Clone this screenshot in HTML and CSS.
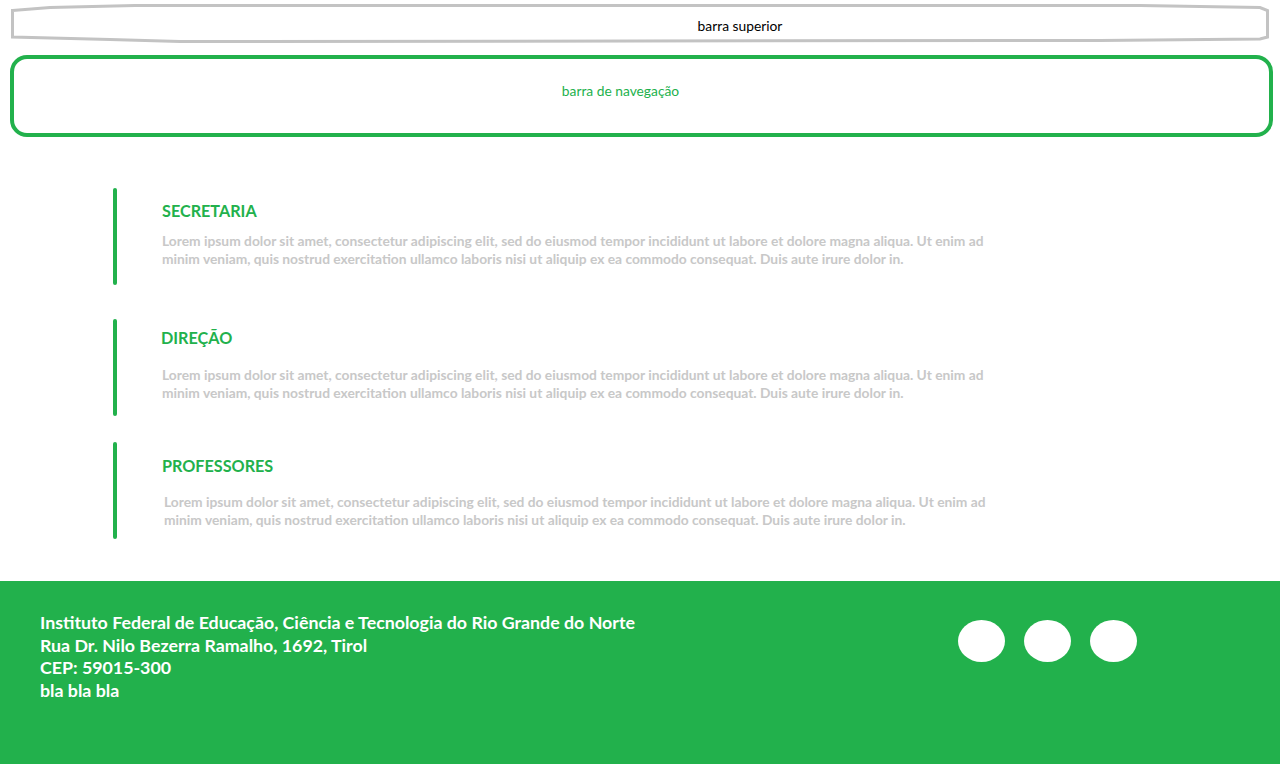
FILE: index.html
```html
<!DOCTYPE html>
<html lang="pt-BR">
<head>
<meta charset="utf-8">
<title>IFRN</title>
<link rel="stylesheet" href="styles.css">
</head>
<body>
<header class="topbar">
  <svg class="topbar-outline" viewBox="0 0 1260 40" preserveAspectRatio="none" aria-hidden="true">
    <polygon points="2.5,6.5 40,3.5 125,1.5 1130,1.5 1250,3.5 1257.5,6.5 1257.5,33 1250,35 1090,36.5 170,37.5 100,35.5 2.5,33" />
  </svg>
  <span class="topbar-label">barra superior</span>
</header>
<nav class="navbar">
  <span class="navbar-label">barra de navegação</span>
</nav>
<main class="content">
  <section class="block block-first">
    <div class="block-bar"></div>
    <div class="block-body">
      <h2 class="block-title">SECRETARIA</h2>
      <p class="block-text">Lorem ipsum dolor sit amet, consectetur adipiscing elit, sed do eiusmod tempor incididunt ut labore et dolore magna aliqua. Ut enim ad minim veniam, quis nostrud exercitation ullamco laboris nisi ut aliquip ex ea commodo consequat. Duis aute irure dolor in.</p>
    </div>
  </section>
  <section class="block block-second">
    <div class="block-bar"></div>
    <div class="block-body">
      <h2 class="block-title">DIREÇÃO</h2>
      <p class="block-text">Lorem ipsum dolor sit amet, consectetur adipiscing elit, sed do eiusmod tempor incididunt ut labore et dolore magna aliqua. Ut enim ad minim veniam, quis nostrud exercitation ullamco laboris nisi ut aliquip ex ea commodo consequat. Duis aute irure dolor in.</p>
    </div>
  </section>
  <section class="block block-third">
    <div class="block-bar"></div>
    <div class="block-body">
      <h2 class="block-title">PROFESSORES</h2>
      <p class="block-text">Lorem ipsum dolor sit amet, consectetur adipiscing elit, sed do eiusmod tempor incididunt ut labore et dolore magna aliqua. Ut enim ad minim veniam, quis nostrud exercitation ullamco laboris nisi ut aliquip ex ea commodo consequat. Duis aute irure dolor in.</p>
    </div>
  </section>
</main>
<footer class="footer">
  <address class="footer-info">
    Instituto Federal de Educação, Ciência e Tecnologia do Rio Grande do Norte<br>
    Rua Dr. Nilo Bezerra Ramalho, 1692, Tirol<br>
    CEP: 59015-300<br>
    bla bla bla
  </address>
  <div class="footer-social">
    <span class="social-dot"></span>
    <span class="social-dot"></span>
    <span class="social-dot"></span>
  </div>
</footer>
</body>
</html>
```

FILE: styles.css
```css
* { box-sizing: border-box; }

html, body {
  margin: 0;
  padding: 0;
  background: #ffffff;
  font-family: "Lato", "Open Sans", sans-serif;
}

.topbar {
  position: relative;
  height: 40px;
  margin: 4px 10px 0 10px;
  display: flex;
  align-items: center;
  justify-content: center;
  padding-left: 200px;
  padding-top: 3px;
}

.topbar-outline {
  position: absolute;
  inset: 0;
  width: 100%;
  height: 100%;
}

.topbar-outline polygon {
  fill: none;
  stroke: #c3c3c3;
  stroke-width: 3;
}

.topbar-label {
  position: relative;
  font-size: 13.8px;
  color: #000000;
}

.navbar {
  height: 82px;
  margin: 11px 7px 0 10px;
  border: 4px solid #22b14c;
  border-radius: 17px;
  display: flex;
  align-items: center;
  justify-content: center;
  padding-right: 42px;
  padding-bottom: 12px;
}

.navbar-label {
  font-size: 13.8px;
  color: #22b14c;
}

.content {
  padding: 51px 0 42px 113px;
  display: flex;
  flex-direction: column;
}

.block {
  display: flex;
  height: 97px;
}

.block-second { margin-top: 34px; }
.block-third { margin-top: 26px; }

.block-bar {
  width: 4px;
  flex: none;
  background: #22b14c;
  border-radius: 2px;
}

.block-body {
  padding-left: 45px;
  padding-top: 12px;
}

.block-second .block-body { padding-top: 8px; padding-left: 44px; }
.block-third .block-body { padding-top: 13px; }

.block-title {
  margin: 0;
  font-size: 16.2px;
  font-weight: 700;
  color: #22b14c;
  line-height: 21px;
}

.block-text {
  margin: 11px 0 0 0;
  width: 836px;
  font-size: 13.8px;
  font-weight: 700;
  color: #c8c8c8;
  line-height: 18px;
}

.block-second .block-text { margin-top: 18px; padding-left: 1px; }
.block-third .block-text { margin-top: 17px; padding-left: 2px; }

.footer {
  background: #22b14c;
  height: 183px;
  display: flex;
  align-items: flex-start;
  padding: 0 143px 0 40px;
}

.footer-info {
  font-style: normal;
  font-size: 17.8px;
  font-weight: 700;
  color: #ffffff;
  line-height: 22.7px;
  padding-top: 30px;
}

.footer-social {
  margin-left: auto;
  padding-top: 39px;
  display: flex;
  gap: 19px;
}

.social-dot {
  width: 47px;
  height: 42px;
  border-radius: 50%;
  background: #ffffff;
}
```
